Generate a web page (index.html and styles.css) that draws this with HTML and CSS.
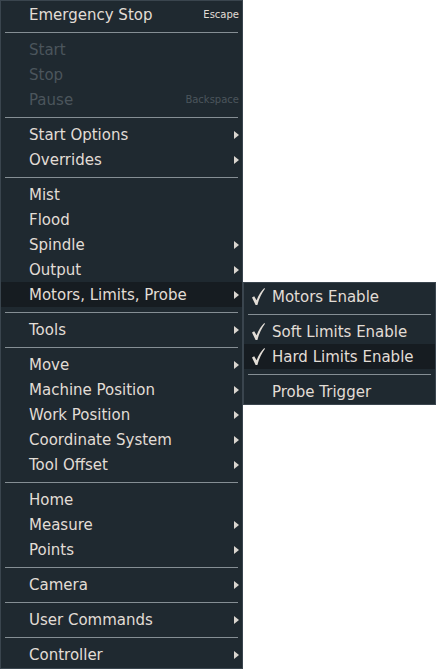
FILE: index.html
```html
<!DOCTYPE html>
<html>
<head>
<meta charset="utf-8">
<link rel="stylesheet" href="styles.css">
</head>
<body>
<div class="menu main">
  <div class="item"><span class="label">Emergency Stop</span><span class="key">Escape</span></div>
  <div class="sep"></div>
  <div class="item disabled"><span class="label">Start</span></div>
  <div class="item disabled"><span class="label">Stop</span></div>
  <div class="item disabled"><span class="label">Pause</span><span class="key">Backspace</span></div>
  <div class="sep"></div>
  <div class="item sub"><span class="label">Start Options</span><span class="arrow"></span></div>
  <div class="item sub"><span class="label">Overrides</span><span class="arrow"></span></div>
  <div class="sep"></div>
  <div class="item"><span class="label">Mist</span></div>
  <div class="item"><span class="label">Flood</span></div>
  <div class="item sub"><span class="label">Spindle</span><span class="arrow"></span></div>
  <div class="item sub"><span class="label">Output</span><span class="arrow"></span></div>
  <div class="item sub active"><span class="label">Motors, Limits, Probe</span><span class="arrow"></span></div>
  <div class="sep"></div>
  <div class="item sub"><span class="label">Tools</span><span class="arrow"></span></div>
  <div class="sep"></div>
  <div class="item sub"><span class="label">Move</span><span class="arrow"></span></div>
  <div class="item sub"><span class="label">Machine Position</span><span class="arrow"></span></div>
  <div class="item sub"><span class="label">Work Position</span><span class="arrow"></span></div>
  <div class="item sub"><span class="label">Coordinate System</span><span class="arrow"></span></div>
  <div class="item sub"><span class="label">Tool Offset</span><span class="arrow"></span></div>
  <div class="sep"></div>
  <div class="item"><span class="label">Home</span></div>
  <div class="item sub"><span class="label">Measure</span><span class="arrow"></span></div>
  <div class="item sub"><span class="label">Points</span><span class="arrow"></span></div>
  <div class="sep"></div>
  <div class="item sub"><span class="label">Camera</span><span class="arrow"></span></div>
  <div class="sep"></div>
  <div class="item sub"><span class="label">User Commands</span><span class="arrow"></span></div>
  <div class="sep"></div>
  <div class="item sub"><span class="label">Controller</span><span class="arrow"></span></div>
</div>
<div class="menu submenu">
  <div class="item"><span class="check"><svg viewBox="0 0 13 17" width="13" height="17"><path d="M0 9.5 L2.2 8.3 L4.6 12.2 C6.6 7 9.2 3 12.3 0 L13 0.7 C10 4.5 7.2 10 5.4 17 L3.6 17 Z"/></svg></span><span class="label">Motors Enable</span></div>
  <div class="sep"></div>
  <div class="item"><span class="check"><svg viewBox="0 0 13 17" width="13" height="17"><path d="M0 9.5 L2.2 8.3 L4.6 12.2 C6.6 7 9.2 3 12.3 0 L13 0.7 C10 4.5 7.2 10 5.4 17 L3.6 17 Z"/></svg></span><span class="label">Soft Limits Enable</span></div>
  <div class="item active"><span class="check"><svg viewBox="0 0 13 17" width="13" height="17"><path d="M0 9.5 L2.2 8.3 L4.6 12.2 C6.6 7 9.2 3 12.3 0 L13 0.7 C10 4.5 7.2 10 5.4 17 L3.6 17 Z"/></svg></span><span class="label">Hard Limits Enable</span></div>
  <div class="sep"></div>
  <div class="item"><span class="check"></span><span class="label">Probe Trigger</span></div>
</div>
</body>
</html>
```
FILE: styles.css
```css
* { box-sizing: border-box; }
html, body {
  margin: 0;
  padding: 0;
  background: #ffffff;
}
body {
  position: relative;
  width: 436px;
  height: 669px;
  overflow: hidden;
  font-family: "DejaVu Sans", Verdana, sans-serif;
  font-size: 15px;
  color: #e2ddd6;
}
.menu {
  background: #1f2930;
  border: 1px solid #3a454e;
  padding: 1px 0;
}
.main {
  width: 243px;
  height: 669px;
}
.submenu {
  position: absolute;
  left: 243px;
  top: 282px;
  width: 193px;
  padding: 1px 0 0;
}
.item {
  height: 25px;
  display: flex;
  align-items: center;
  padding: 0 3px 0 28px;
}
.submenu .item {
  padding-left: 7px;
}
.item.active {
  background: #161c21;
}
.label {
  flex: 1;
  white-space: nowrap;
}
.disabled {
  color: #4b555c;
}
.key {
  font-size: 10px;
  color: #e2ddd6;
}
.disabled .key {
  color: #4b555c;
}
.arrow {
  width: 0;
  height: 0;
  border-left: 5px solid #d9d5cf;
  border-top: 4px solid transparent;
  border-bottom: 4px solid transparent;
}
.check {
  width: 21px;
  flex: none;
  display: flex;
  align-items: center;
  padding-left: 1px;
}
.check svg {
  display: block;
  fill: #e2ddd6;
}
.sep {
  height: 10px;
  display: flex;
  align-items: center;
  padding: 0 4px;
}
.sep::before {
  content: "";
  display: block;
  flex: 1;
  height: 1px;
  background: #858e94;
}
```
